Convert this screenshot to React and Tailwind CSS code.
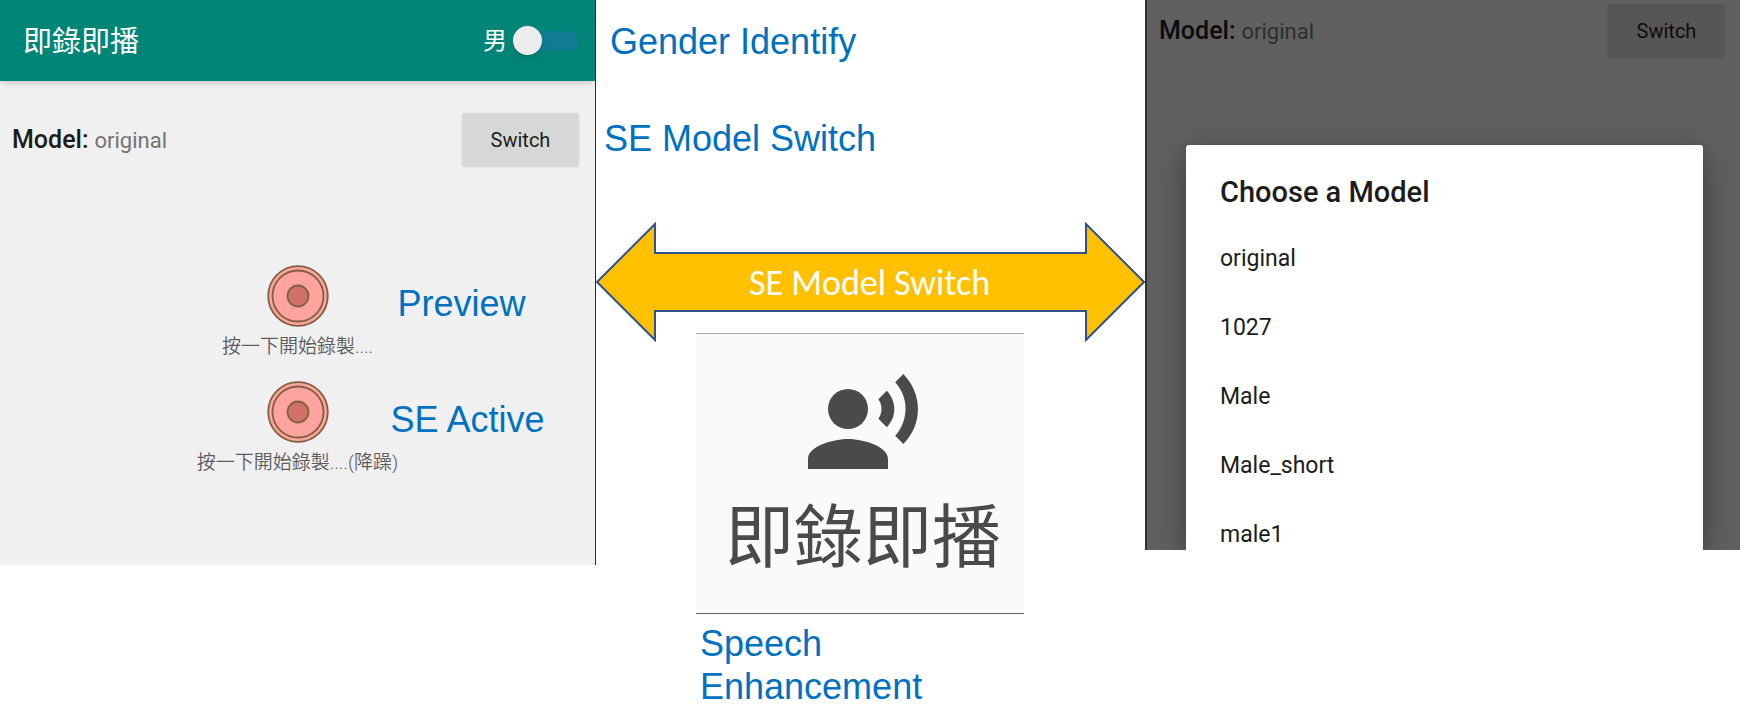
import { MdRecordVoiceOver } from 'react-icons/md';

const MODELS = ['original', '1027', 'Male', 'Male_short', 'male1'];

const NOTE = "font-['Liberation_Sans',Arial,sans-serif] text-[36px] leading-[43px] text-[#0070c0]";

function ModelRow({ dimmed }) {
  return (
    <div className="flex items-center justify-between">
      <p className="flex items-baseline gap-[6px]">
        <span className={dimmed ? 'text-[25px] font-medium text-[#0c0c0c]' : 'text-[25px] font-medium text-[#1c1c1c]'}>
          Model:
        </span>
        <span className={dimmed ? 'text-[22px] text-[#2e2e2e]' : 'text-[22px] text-[#737373]'}>original</span>
      </p>
      <button
        type="button"
        className={
          dimmed
            ? 'h-[53px] w-[117px] rounded-[3px] bg-[#565656] text-xl text-[#0c0c0c] shadow-sm'
            : 'h-[53px] w-[117px] rounded-[3px] bg-[#d6d8d7] text-xl text-[#1c1c1c] shadow-sm'
        }
      >
        Switch
      </button>
    </div>
  );
}

function RecordIcon() {
  return (
    <svg viewBox="0 0 62 62" className="size-[62px]" aria-hidden="true">
      <g stroke="#80603f" strokeWidth="1.8">
        <circle cx="31" cy="31" r="29.8" fill="#ffa39e" />
        <circle cx="31" cy="31" r="25.5" fill="#ffa39e" />
        <circle cx="31" cy="31" r="10.5" fill="#d07268" />
      </g>
    </svg>
  );
}

function Recorder({ caption, note, noteClass }) {
  return (
    <div>
      <div className="grid grid-cols-[1fr_62px_1fr] items-center">
        <button type="button" aria-label={caption} className="col-start-2 rounded-full">
          <RecordIcon />
        </button>
        <p className={`${NOTE} ${noteClass}`}>{note}</p>
      </div>
      <p className="mt-[6px] text-center text-[19px] leading-7 font-[350] text-[#5c5c5c]">{caption}</p>
    </div>
  );
}

function RecorderScreen() {
  return (
    <section className="border-r border-[#2b2b2b] bg-[#f0f0f0] pb-[88px]">
      <header className="flex h-[81px] items-center justify-between bg-[#008577] pr-4 pl-[23px] text-white shadow-md">
        <h1 className="pt-[2px] text-[29px] leading-9">即錄即播</h1>
        <label className="flex items-center gap-3 text-2xl">
          男
          <input
            type="checkbox"
            role="switch"
            className="flex h-5 w-[60px] appearance-none items-center rounded-full bg-[#107c91] before:-ml-[6px] before:size-[29px] before:shrink-0 before:rounded-full before:bg-[#ececec] before:shadow-md"
          />
        </label>
      </header>
      <div className="pt-8 pr-4 pl-3">
        <ModelRow />
      </div>
      <div className="mt-[99px] flex flex-col gap-5">
        <Recorder caption="按一下開始錄製...." note="Preview" noteClass="pt-[14px] pl-[69px]" />
        <Recorder caption="按一下開始錄製....(降躁)" note="SE Active" noteClass="pt-[14px] pl-[62px]" />
      </div>
    </section>
  );
}

function SwitchArrow() {
  return (
    <div className="grid items-center">
      <svg
        viewBox="0 0 549 120"
        preserveAspectRatio="none"
        className="h-[120px] w-full [grid-area:1/1]"
        aria-hidden="true"
      >
        <path
          d="M1 60 59 2V31H490V2L548 60 490 118V89H59V118Z"
          fill="#ffc000"
          stroke="#2f528f"
          strokeWidth="2"
          vectorEffect="non-scaling-stroke"
        />
      </svg>
      <p className="pt-[2px] pr-[2px] text-center font-[Carlito,Lato,sans-serif] text-[36px] leading-10 text-white [grid-area:1/1]">
        SE Model Switch
      </p>
    </div>
  );
}

function Annotations() {
  return (
    <section>
      <p className={`${NOTE} mt-5 pl-[14px]`}>Gender Identify</p>
      <p className={`${NOTE} mt-[54px] mb-[62px] pl-2`}>SE Model Switch</p>
      <SwitchArrow />
      <div className="-mt-[9px] flex justify-center pr-[21px]">
        <div className="w-[328px]">
          <figure className="flex flex-col items-center border-t border-b border-t-[#a8a8a8] border-b-[#666] bg-[#fafafa] pt-[30px] pb-[22px] pl-[6px] text-[#4a4a4a]">
            <MdRecordVoiceOver className="size-[120px]" />
            <figcaption className="pt-[3px] text-[69px] leading-[104px]">即錄即播</figcaption>
          </figure>
          <p className={`${NOTE} mt-2 pl-1`}>
            Speech
            <br />
            Enhancement
          </p>
        </div>
      </div>
    </section>
  );
}

function ModelDialogScreen() {
  return (
    <section className="overflow-hidden border-l-2 border-[#303030] bg-[#606060]">
      <div className="pt-1 pr-[15px] pl-3">
        <ModelRow dimmed />
      </div>
      <div
        role="dialog"
        aria-labelledby="dialog-title"
        className="mt-[88px] mr-[37px] ml-[39px] rounded-t-[3px] bg-white px-[34px] pt-[31px] pb-[2px] text-[#1c1c1c] shadow-[0_8px_28px_rgba(0,0,0,0.4)]"
      >
        <h2 id="dialog-title" className="text-[29px] leading-8 font-medium">
          Choose a Model
        </h2>
        <ul className="mt-[38px] flex flex-col gap-[43px]">
          {MODELS.map((model) => (
            <li key={model}>
              <button type="button" className="block w-full text-left text-[23px] leading-[26px]">
                {model}
              </button>
            </li>
          ))}
        </ul>
      </div>
    </section>
  );
}

export default function App() {
  return (
    <main className="grid min-h-screen grid-cols-[596fr_549fr_595fr] items-start bg-white font-[Roboto,'Noto_Sans_CJK_TC',sans-serif]">
      <RecorderScreen />
      <Annotations />
      <ModelDialogScreen />
    </main>
  );
}
